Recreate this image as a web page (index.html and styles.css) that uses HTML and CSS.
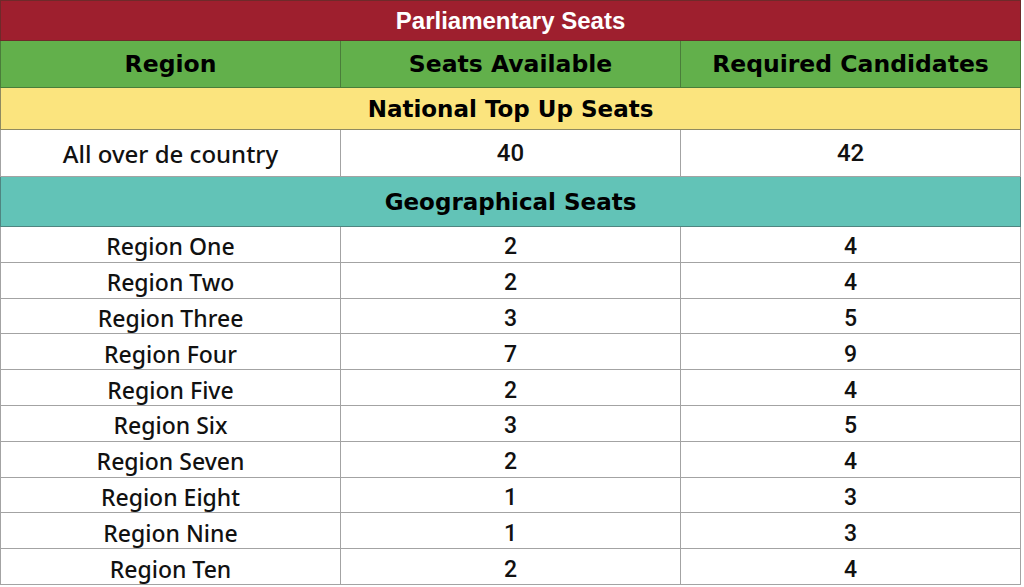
FILE: index.html
```html
<!DOCTYPE html>
<html>
<head>
<meta charset="utf-8">
<link rel="stylesheet" href="styles.css">
</head>
<body>
<table class="seats">
  <colgroup><col class="c"><col class="c"><col class="c"></colgroup>
  <tr class="title"><th colspan="3">Parliamentary Seats</th></tr>
  <tr class="head"><th>Region</th><th>Seats Available</th><th>Required Candidates</th></tr>
  <tr class="sec yellow"><th colspan="3">National Top Up Seats</th></tr>
  <tr class="big"><td>All over de country</td><td class="num">40</td><td class="num">42</td></tr>
  <tr class="sec teal"><th colspan="3">Geographical Seats</th></tr>
  <tr class="row"><td>Region One</td><td class="num">2</td><td class="num">4</td></tr>
  <tr class="row"><td>Region Two</td><td class="num">2</td><td class="num">4</td></tr>
  <tr class="row"><td>Region Three</td><td class="num">3</td><td class="num">5</td></tr>
  <tr class="row"><td>Region Four</td><td class="num">7</td><td class="num">9</td></tr>
  <tr class="row"><td>Region Five</td><td class="num">2</td><td class="num">4</td></tr>
  <tr class="row"><td>Region Six</td><td class="num">3</td><td class="num">5</td></tr>
  <tr class="row"><td>Region Seven</td><td class="num">2</td><td class="num">4</td></tr>
  <tr class="row"><td>Region Eight</td><td class="num">1</td><td class="num">3</td></tr>
  <tr class="row"><td>Region Nine</td><td class="num">1</td><td class="num">3</td></tr>
  <tr class="row"><td>Region Ten</td><td class="num">2</td><td class="num">4</td></tr>
</table>
</body>
</html>
```
FILE: styles.css
```css
html, body { margin: 0; padding: 0; background: #ffffff; }
.seats {
  border-collapse: collapse;
  width: 1020px;
  table-layout: fixed;
  font-family: "Noto Sans", "DejaVu Sans", sans-serif;
  color: #111;
}
.seats .c { width: 340px; }
.seats th, .seats td {
  padding: 0;
  text-align: center;
  border: 1.5px solid #a3a3a3;
  overflow: hidden;
  white-space: nowrap;
}
.title th {
  background: #9e1f2e;
  color: #fff;
  height: 39px;
  font-family: "Liberation Sans", Arial, sans-serif;
  font-weight: bold;
  font-size: 24px;
  border-color: #6e2a2a;
}
.head th {
  background: #62b04b;
  height: 46px;
  font-family: "DejaVu Sans", sans-serif;
  font-weight: bold;
  font-size: 23.5px;
  border-color: #4a7d3a;
  color: #000;
}
.sec th {
  font-family: "DejaVu Sans", sans-serif;
  font-weight: bold;
  font-size: 23px;
  color: #000;
}
.yellow th { background: #fbe47e; height: 41px; border-color: #8f8a60; }
.teal th { background: #62c3b7; height: 49px; border-color: #4f8580; }
.big td { height: 46px; font-size: 24px; font-weight: 500; }
.row td { height: 29.8px; font-size: 23px; font-weight: 500; line-height: 1; padding-top: 5px; }
.num { font-family: "Roboto", "Liberation Sans", sans-serif; }
```
